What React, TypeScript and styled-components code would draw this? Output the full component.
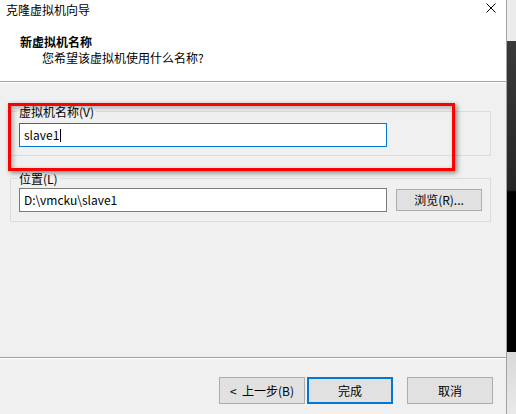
import React from "react";
import styled, { createGlobalStyle } from "styled-components";

const Global = createGlobalStyle`
  html, body { margin: 0; padding: 0; background: #f0f0f0; }
  body { width: 516px; height: 414px; overflow: hidden; font-family: "Noto Sans CJK SC", "Microsoft YaHei", sans-serif; font-size: 12px; color: #000; }
  * { box-sizing: border-box; }
`;

const Screen = styled.div`
  display: flex;
  width: 516px;
  height: 414px;
`;

const Dialog = styled.div`
  width: 506px;
  height: 414px;
  display: flex;
  flex-direction: column;
  background: #f0f0f0;
`;

const DesktopStrip = styled.div`
  width: 10px;
  height: 414px;
  border-left: 1px solid #a3a3a3;
  background: linear-gradient(
    to bottom,
    #ececec 0px,
    #ececec 41px,
    #3a3a3a 41px,
    #262626 190px,
    #000 192px,
    #000 352px,
    #d9d9d9 352px,
    #e9e9e9 414px
  );
`;

const TitleBar = styled.div`
  height: 30px;
  background: #fff;
  display: flex;
  justify-content: space-between;
  align-items: flex-start;
  padding: 2px 10px 0 6px;
  line-height: 16px;
`;

const CloseIcon = styled.svg`
  margin-top: 1px;
  display: block;
`;

const Header = styled.div`
  height: 51px;
  background: #fff;
  padding: 4px 0 0 20px;
  line-height: 16px;
`;

const Heading = styled.div`
  font-weight: bold;
`;

const SubHeading = styled.div`
  margin-left: 22px;
`;

const Separator = styled.div`
  height: 2px;
  border-top: 1px solid #a0a0a0;
  border-bottom: 1px solid #ffffff;
`;

const Body = styled.div`
  position: relative;
  flex: 1;
  padding: 28px 15px 0 10px;
`;

const GroupBox = styled.div<{ $gap: number; $padBottom: number; $top: number }>`
  margin-top: ${(p) => p.$top}px;
  border: 1px solid #dcdcdc;
  padding-bottom: ${(p) => p.$padBottom}px;
  display: flex;
  flex-direction: column;
  gap: ${(p) => p.$gap}px;
`;

const GroupLabel = styled.div`
  margin-top: -8px;
  margin-left: 6px;
  padding: 0 2px;
  width: fit-content;
  background: #f0f0f0;
  line-height: 16px;
  height: 16px;
`;

const Row = styled.div`
  display: flex;
  align-items: center;
  margin-left: 8px;
`;

const TextInput = styled.div<{ $focused?: boolean }>`
  width: 368px;
  height: 24px;
  background: #fff;
  border: 1px solid ${(p) => (p.$focused ? "#0078d7" : "#7a7a7a")};
  padding: 0 4px;
  display: flex;
  align-items: center;
  line-height: 16px;
`;

const Caret = styled.span`
  display: inline-block;
  width: 1px;
  height: 13px;
  background: #000;
  margin-left: 1px;
`;

const Button = styled.div<{ $primary?: boolean; $w?: number; $h?: number }>`
  width: ${(p) => p.$w ?? 86}px;
  height: ${(p) => p.$h ?? 27}px;
  background: #e1e1e1;
  border: ${(p) => (p.$primary ? "2px solid #0078d7" : "1px solid #adadad")};
  display: flex;
  align-items: center;
  justify-content: center;
  line-height: 16px;
  white-space: pre;
`;

const BrowseButton = styled(Button)`
  margin-left: 9px;
`;

const Highlight = styled.div`
  position: absolute;
  left: 8px;
  top: 20px;
  width: 447px;
  height: 68px;
  border: 3px solid #ff0000;
  box-shadow: 2px 2px 5px rgba(0, 0, 0, 0.45), inset 2px 2px 5px rgba(0, 0, 0, 0.28);
  pointer-events: none;
`;

const Footer = styled.div`
  height: 55px;
  padding: 18px 13px 0 0;
  display: flex;
  justify-content: flex-end;
  align-items: flex-start;
`;

const ButtonGroup = styled.div`
  display: flex;
  gap: 2px;
`;

const CancelButton = styled(Button)`
  margin-left: 14px;
`;

export default function App() {
  return (
    <>
      <Global />
      <Screen>
        <Dialog>
          <TitleBar>
            <span>克隆虚拟机向导</span>
            <CloseIcon width="10" height="10" viewBox="0 0 10 10">
              <path d="M0.5 0.5 L9.5 9.5 M9.5 0.5 L0.5 9.5" stroke="#000" strokeWidth="1" fill="none" />
            </CloseIcon>
          </TitleBar>
          <Header>
            <Heading>新虚拟机名称</Heading>
            <SubHeading>您希望该虚拟机使用什么名称?</SubHeading>
          </Header>
          <Separator />
          <Body>
            <GroupBox $top={0} $gap={3} $padBottom={8}>
              <GroupLabel>虚拟机名称(V)</GroupLabel>
              <Row>
                <TextInput $focused>
                  slave1
                  <Caret />
                </TextInput>
              </Row>
            </GroupBox>
            <GroupBox $top={22} $gap={1} $padBottom={9}>
              <GroupLabel>位置(L)</GroupLabel>
              <Row>
                <TextInput>D:\vmcku\slave1</TextInput>
                <BrowseButton $h={22}>浏览(R)...</BrowseButton>
              </Row>
            </GroupBox>
            <Highlight />
          </Body>
          <Separator />
          <Footer>
            <ButtonGroup>
              <Button>{"<  上一步(B)"}</Button>
              <Button $primary>完成</Button>
            </ButtonGroup>
            <CancelButton>取消</CancelButton>
          </Footer>
        </Dialog>
        <DesktopStrip />
      </Screen>
    </>
  );
}
